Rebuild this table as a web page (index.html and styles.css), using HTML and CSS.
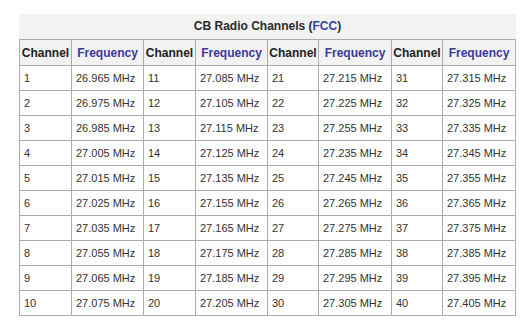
FILE: index.html
```html
<!DOCTYPE html>
<html>
<head>
<meta charset="utf-8">
<link rel="stylesheet" href="styles.css">
</head>
<body>
<div class="wrap">
<table class="cb">
<caption class="title">CB Radio Channels (<span class="link">FCC</span>)</caption>
<colgroup>
<col class="c-ch"><col class="c-fq"><col class="c-ch"><col class="c-fq"><col class="c-ch2"><col class="c-fq2"><col class="c-ch2"><col class="c-fq2">
</colgroup>
<thead>
<tr><th>Channel</th><th class="fq">Frequency</th><th>Channel</th><th class="fq">Frequency</th><th>Channel</th><th class="fq">Frequency</th><th>Channel</th><th class="fq">Frequency</th></tr>
</thead>
<tbody>
<tr><td>1</td><td>26.965 MHz</td><td>11</td><td>27.085 MHz</td><td>21</td><td>27.215 MHz</td><td>31</td><td>27.315 MHz</td></tr>
<tr><td>2</td><td>26.975 MHz</td><td>12</td><td>27.105 MHz</td><td>22</td><td>27.225 MHz</td><td>32</td><td>27.325 MHz</td></tr>
<tr><td>3</td><td>26.985 MHz</td><td>13</td><td>27.115 MHz</td><td>23</td><td>27.255 MHz</td><td>33</td><td>27.335 MHz</td></tr>
<tr><td>4</td><td>27.005 MHz</td><td>14</td><td>27.125 MHz</td><td>24</td><td>27.235 MHz</td><td>34</td><td>27.345 MHz</td></tr>
<tr><td>5</td><td>27.015 MHz</td><td>15</td><td>27.135 MHz</td><td>25</td><td>27.245 MHz</td><td>35</td><td>27.355 MHz</td></tr>
<tr><td>6</td><td>27.025 MHz</td><td>16</td><td>27.155 MHz</td><td>26</td><td>27.265 MHz</td><td>36</td><td>27.365 MHz</td></tr>
<tr><td>7</td><td>27.035 MHz</td><td>17</td><td>27.165 MHz</td><td>27</td><td>27.275 MHz</td><td>37</td><td>27.375 MHz</td></tr>
<tr><td>8</td><td>27.055 MHz</td><td>18</td><td>27.175 MHz</td><td>28</td><td>27.285 MHz</td><td>38</td><td>27.385 MHz</td></tr>
<tr><td>9</td><td>27.065 MHz</td><td>19</td><td>27.185 MHz</td><td>29</td><td>27.295 MHz</td><td>39</td><td>27.395 MHz</td></tr>
<tr><td>10</td><td>27.075 MHz</td><td>20</td><td>27.205 MHz</td><td>30</td><td>27.305 MHz</td><td>40</td><td>27.405 MHz</td></tr>
</tbody>
</table>
</div>
</body>
</html>
```

FILE: styles.css
```css
html, body {
  margin: 0;
  padding: 0;
  background: #ffffff;
}
.wrap {
  padding: 14px 0 0 19px;
}
.cb {
  border-collapse: collapse;
  table-layout: fixed;
  width: 497px;
  font-family: "Liberation Sans", Arial, sans-serif;
  color: #333333;
}
.title {
  background: #f2f2f2;
  height: 25px;
  line-height: 25px;
  font-size: 12px;
  font-weight: bold;
  color: #2b2b2b;
  text-align: center;
}
.link {
  color: #3344aa;
}
.c-ch { width: 52px; }
.c-fq { width: 72px; }
.c-ch2 { width: 51px; }
.c-fq2 { width: 73px; }
.cb th, .cb td {
  border: 1px solid #ababab;
  padding: 0 4px;
  white-space: nowrap;
  overflow: hidden;
}
.cb th {
  background: #f2f2f2;
  height: 25px;
  font-size: 12px;
  font-weight: bold;
  color: #222222;
  text-align: center;
  padding: 0;
}
.cb th.fq {
  color: #3a3a9c;
}
.cb td {
  height: 24px;
  font-size: 11px;
  text-align: left;
}
```
